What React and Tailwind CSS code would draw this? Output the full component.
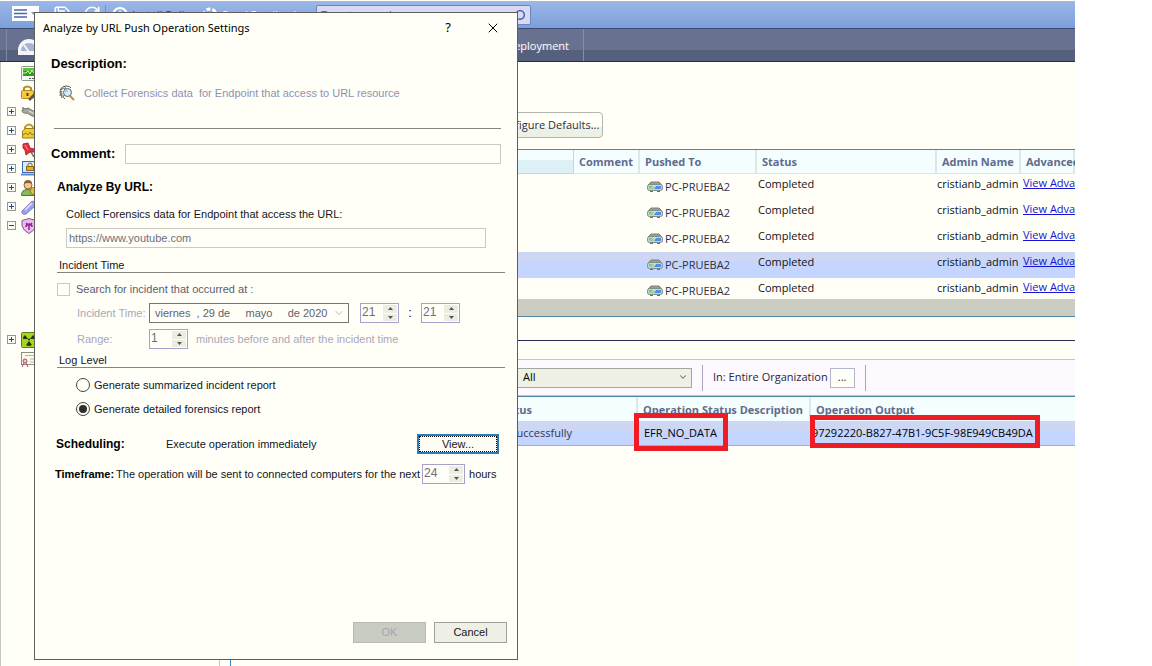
import { useState } from 'react'
import { X, Search, RotateCw, Save, ChevronDown } from 'lucide-react'

const OPERATIONS = [1, 2, 3, 4, 5].map(id => ({
  id,
  computer: 'PC-PRUEBA2',
  status: 'Completed',
  admin: 'cristianb_admin',
}))

const TREE = [
  { icon: 'monitor' },
  { icon: 'lockKey' },
  { icon: 'tool', toggle: '+' },
  { icon: 'lock', toggle: '+' },
  { icon: 'pin', toggle: '+' },
  { icon: 'laptop', toggle: '+' },
  { icon: 'user', toggle: '+' },
  { icon: 'usb', toggle: '+' },
  { icon: 'shield', toggle: '-' },
  {}, {}, {}, {}, {},
  { icon: 'hazard', toggle: '+' },
  { icon: 'certificate' },
]

const TREE_ICONS = {
  monitor: (
    <>
      <rect x="0.5" y="0.5" width="17" height="14" rx="1" fill="#f4f7ee" stroke="#8f9a8c" />
      <rect x="2" y="2" width="15" height="8" fill="#2f9a22" />
      <path d="M2 2h15v3H2z" fill="#5cc23c" />
      <path d="M2 7h3l2-2 2 3 2-4 2 3h3" fill="none" stroke="#d6ffb8" />
      <path d="M8 12.5h2M11 12.5h2" stroke="#4f5a4c" />
    </>
  ),
  lockKey: (
    <>
      <path d="M3 6V3q3-3 7 0v3" fill="none" stroke="#b08a2c" strokeWidth="2" />
      <rect x="0.5" y="5.5" width="12" height="8" rx="1" fill="#f6ca3c" stroke="#b5861a" />
      <path d="M6.5 8v3" stroke="#5b4308" strokeWidth="2" />
      <path d="M8 15l7-7" stroke="#55554f" strokeWidth="2.5" />
    </>
  ),
  tool: (
    <>
      <path d="M1 4q2-1 3 1l3-1 9 5v4l-5-1-5-3q-5 1-5-3l2 0z" fill="#a8a8a0" stroke="#77776f" />
      <path d="M8 7l8 4" stroke="#e4e4dc" />
    </>
  ),
  lock: (
    <>
      <path d="M4 6V4q4-5 8 0v2" fill="none" stroke="#c09a24" strokeWidth="2" />
      <path d="M1.5 8l3-2.500h8l3 2.500v7h-14z" fill="#f2c834" stroke="#a57b14" />
      <path d="M2 12l3-2 2 2 2-3 2 3 4-2" fill="none" stroke="#6f8f1a" />
    </>
  ),
  pin: (
    <>
      <path d="M10 10l3 5" stroke="#77776f" strokeWidth="1.5" />
      <path d="M2 2l5-1 2 5 4 1v3l-4 0-4 3-1-5-2-2z" fill="#e0323c" stroke="#b82630" />
      <path d="M4 3l3 5" stroke="#ff9a9e" />
    </>
  ),
  laptop: (
    <>
      <rect x="1.5" y="0.5" width="16" height="11" fill="#d9e9ff" stroke="#3b66b8" />
      <path d="M7 5V3q2-2 4 0v2" fill="none" stroke="#8a6a14" />
      <rect x="5.5" y="5.500" width="7" height="4" fill="#e8ae24" stroke="#8a6a14" />
      <path d="M0 13.5h17" stroke="#5c87d6" strokeWidth="2" />
    </>
  ),
  user: (
    <>
      <path d="M0.500 15.500q0-6 6-6t7 6z" fill="#86b85c" stroke="#4f7a2e" />
      <circle cx="7" cy="5" r="4" fill="#f2c995" stroke="#8c6430" />
      <path d="M3 4q0-4 4-4t4 4q-4-2-8 0z" fill="#8c6430" />
      <rect x="9.5" y="7.500" width="7" height="7" rx="3" fill="#f0bd2c" stroke="#9a7210" />
    </>
  ),
  usb: (
    <>
      <path d="M1 12L11 2l4 2-1 3-9 8q-5 1-4-3z" fill="#9da0ec" stroke="#8078c0" />
      <path d="M4 11l7-7" stroke="#d8d2ff" strokeWidth="2" />
    </>
  ),
  shield: (
    <>
      <path d="M8 0.5l7 2v5q-1 5-7 8-6-3-7-8v-5z" fill="#f0b8f2" stroke="#77607a" />
      <path d="M8 8v4M8 8L5 5M8 8l3-3M5 9q0-3 3-3t3 3" stroke="#8f2a8c" strokeWidth="1.5" fill="none" />
    </>
  ),
  hazard: (
    <>
      <rect x="0.5" y="0.5" width="16" height="15" rx="1" fill="#a6d422" stroke="#5f7f14" />
      <path d="M7 7L4 3Q1.500 5 2 7zM9 7l3-4q2.500 2 2 4zM8 9l-3 4q3 2 6 0z" fill="#26330c" />
      <circle cx="8" cy="7.500" r="1" fill="#26330c" />
    </>
  ),
  certificate: (
    <>
      <rect x="0.5" y="1.5" width="16" height="12" fill="#fbfbea" stroke="#8f8f7c" />
      <path d="M4 4.5h9M9 8h6M9 11h6" stroke="#b5b59c" />
      <circle cx="4" cy="10" r="2" fill="#f3c7d2" stroke="#b0446a" />
      <path d="M3 12l-2 4M5 12l2 4" stroke="#b0446a" />
    </>
  ),
}

function ComputerIcon() {
  return (
    <svg width="16" height="12" viewBox="0 0 16 12">
      <path d="M4 1h8l3 3H1z" fill="#9a9e98" stroke="#7c807a" />
      <rect x="0.5" y="3.5" width="15" height="6" rx="2" fill="#c4d2da" stroke="#858b88" />
      <path d="M2 5h5L5 8H2z" fill="#6fd252" />
      <path d="M9 5h5v3H7z" fill="#4c92e0" />
      <path d="M2 8.500l5-4 2 1" fill="none" stroke="#eef4f6" strokeWidth="0.500" />
      <path d="M3 10.5h3M10 10.5h3" stroke="#6b6f68" />
    </svg>
  )
}

function FingerprintIcon() {
  return (
    <svg width="17" height="17" viewBox="0 0 17 17" fill="none">
      <path d="M1 5q2-4 6-4 4 0 5 2M1 8q0-5 6-5M1 11q0-2 2-5M3 13q-1-2 0-5M6 14q-2-1-2-4" stroke="#55554f" />
      <path d="M11 11l4 4" stroke="#c98a3c" strokeWidth="2" />
      <circle cx="8.500" cy="7.500" r="4" fill="#d5ebf5" stroke="#4f6670" />
      <path d="M6 7q1-2 3-1" stroke="#8aaebb" />
    </svg>
  )
}

function Spinner({ label, value, wide }) {
  const [val, setVal] = useState(value)
  const step = d => setVal(v => Number(v) + d)
  return (
    <div className={`flex h-5 border border-[#a9a0cc] p-px ${wide ? 'w-[43px]' : 'w-[39px]'}`}>
      <input
        aria-label={label}
        value={val}
        onChange={e => setVal(e.target.value)}
        className="min-w-0 flex-1 pb-0.5 text-xs leading-4 text-[#6d6d78] outline-none"
      />
      <div className="flex w-3.5 flex-col gap-px">
        <button aria-label={`Increase ${label}`} onClick={() => step(1)} className="flex flex-1 items-center justify-center bg-[#ebede2]">
          <svg width="5" height="3" viewBox="0 0 5 3"><path d="M0 3h5L2.5 0z" fill="#55554f" /></svg>
        </button>
        <button aria-label={`Decrease ${label}`} onClick={() => step(-1)} className="flex flex-1 items-center justify-center bg-[#ebede2]">
          <svg width="5" height="3" viewBox="0 0 5 3"><path d="M0 0h5L2.5 3z" fill="#55554f" /></svg>
        </button>
      </div>
    </div>
  )
}

function Radio({ value, checked, onChange, children }) {
  return (
    <label className="flex h-5 items-center gap-1 pl-[41px]">
      <input
        type="radio"
        name="logLevel"
        value={value}
        checked={checked}
        onChange={() => onChange(value)}
        className="size-3.5 appearance-none rounded-full border border-[#44443f] p-0.5 checked:bg-[#2f2f2b] checked:bg-clip-content"
      />
      {children}
    </label>
  )
}

function PushDialog() {
  const [level, setLevel] = useState('detailed')

  return (
    <div role="dialog" aria-labelledby="dialog-title"
      className="absolute top-3 bottom-1.5 left-[34px] flex w-[484px] flex-col border border-[#5e5e5a] bg-[#fffff8] font-['Liberation_Sans',sans-serif] text-[11px] text-[#15151c]">
      <div className="flex h-[30px] shrink-0 items-center pr-4 pl-2 font-['Noto_Sans',sans-serif] text-black">
        <h1 id="dialog-title" className="flex-1">Analyze by URL Push Operation Settings</h1>
        <button className="mr-[34px] text-[13px]" aria-label="Help">?</button>
        <button aria-label="Close"><X size={16} strokeWidth={1.5} /></button>
      </div>

      <h2 className="mt-[11px] pl-4 text-[13px] leading-5 font-bold text-black">Description:</h2>
      <p className="mt-[9px] flex h-5 items-center gap-2 pl-6 text-[#8d91b5]">
        <FingerprintIcon />
        Collect Forensics data&nbsp; for Endpoint that access to URL resource
      </p>
      <hr className="mt-[25px] mr-4 ml-[19px] border-[#85857d]" />

      <div className="mt-[15px] mr-4 ml-4 flex h-5 items-center gap-2.5">
        <label htmlFor="comment" className="text-[13px] font-bold text-black">Comment:</label>
        <input id="comment" className="h-5 min-w-0 flex-1 border border-[#c9cbc0] px-1 outline-none" />
      </div>

      <h2 className="mt-[13px] pl-[22px] text-xs leading-5 font-bold text-black">Analyze By URL:</h2>
      <label htmlFor="url" className="mt-[7px] pl-[31px] leading-5">Collect Forensics data for Endpoint that access the URL:</label>
      <input id="url" defaultValue="https://www.youtube.com"
        className="mt-1 mr-[31px] ml-[31px] h-5 border border-[#c9cbc0] px-0.5 text-[#6d6d7c] outline-none" />

      <h3 className="mt-2.5 mr-3 ml-[22px] border-b border-[#85857d] pl-0.5 leading-[14px]">Incident Time</h3>
      <label className="mt-1.5 flex h-5 items-center gap-1.5 pl-[22px] text-[#5c5c6c]">
        <input type="checkbox" className="size-[13px] appearance-none border border-[#c9cbc0]" />
        Search for incident that occurred at :
      </label>
      <div className="mt-1 flex h-5 items-center pl-[42px]">
        <label htmlFor="date" className="w-[72px] text-[#aaa6b8]">Incident Time:</label>
        <div className="relative mr-[11px] w-[200px]">
          <select id="date" className="h-5 w-full appearance-none border border-[#77776f] pl-[5px] text-[#5f5f70] outline-none">
            <option>viernes&nbsp; , 29 de&nbsp;&nbsp;&nbsp;&nbsp; mayo&nbsp;&nbsp;&nbsp;&nbsp; de 2020</option>
          </select>
          <ChevronDown size={12} strokeWidth={1.5} className="pointer-events-none absolute top-1 right-1 text-[#a0a098]" />
        </div>
        <Spinner label="hour" value="21" />
        <span className="w-[22px] text-center text-[13px]">:</span>
        <Spinner label="minute" value="21" />
      </div>
      <div className="mt-1.5 flex h-5 items-center pl-[42px] text-[#aaa6b8]">
        <span className="w-[72px]">Range:</span>
        <Spinner label="range" value="1" />
        <span className="pl-2">minutes before and after the incident time</span>
      </div>

      <h3 className="mt-1 mr-3 ml-[22px] border-b border-[#85857d] pl-0.5 leading-[14px]">Log Level</h3>
      <div className="mt-[7px] flex flex-col gap-1">
        <Radio value="summary" checked={level === 'summary'} onChange={setLevel}>Generate summarized incident report</Radio>
        <Radio value="detailed" checked={level === 'detailed'} onChange={setLevel}>Generate detailed forensics report</Radio>
      </div>

      <div className="mt-[15px] flex h-5 items-center pr-[18px] pl-[21px]">
        <h2 className="w-[110px] text-xs font-bold text-black">Scheduling:</h2>
        <span className="flex-1">Execute operation immediately</span>
        <button className="h-5 w-[82px] border-2 border-[#2b7bb5] bg-[#fdfdf6]">
          <span className="flex h-4 items-center justify-center border border-dotted border-black">View...</span>
        </button>
      </div>
      <div className="mt-2.5 flex h-5 items-center gap-0.5 pl-5">
        <h2 className="font-bold text-black">Timeframe:</h2>
        <span>The operation will be sent to connected computers for the next</span>
        <Spinner label="hours" value="24" wide />
        <span className="pl-0.5">hours</span>
      </div>

      <div className="mt-auto flex justify-end gap-2 pr-2.5 pb-4">
        <button disabled className="h-[21px] w-[73px] border border-[#b9bbb2] bg-[#c9ccc2] text-[#aaa0b8]">OK</button>
        <button className="h-[21px] w-[73px] border border-[#9fa29a] bg-[#eef0e6]">Cancel</button>
      </div>
    </div>
  )
}

function TopBars() {
  return (
    <>
      <div className="mt-px flex h-7 items-start border-b border-[#3a4a78] bg-linear-to-b from-[#9cb7e8] to-[#7c9fda] pt-1 text-white">
        <button aria-label="Menu" className="mt-px ml-3 flex h-[15px] w-[27px] items-center gap-1 bg-white pl-0.5">
          <svg width="13" height="9" viewBox="0 0 13 9"><path d="M0 1h13M0 4.5h13M0 8h13" stroke="#4667a8" strokeWidth="1.5" /></svg>
          <svg width="5" height="3" viewBox="0 0 5 3"><path d="M0 0h5L2.5 3z" fill="#7f9ac8" /></svg>
        </button>
        <Save size={18} className="ml-3.5" />
        <RotateCw size={18} className="ml-3" />
        <span className="ml-1 h-5 w-px bg-[#7291cc]" />
        <svg width="16" height="16" viewBox="0 0 16 16" className="mt-0.5 ml-1.5"><circle cx="8" cy="8" r="7" fill="none" stroke="white" strokeWidth="2" /><path d="M8 3v8M5 8l3 3 3-3" stroke="white" fill="none" /></svg>
        <span className="mt-0.5 ml-1 w-[70px] text-[#25407e]">Install Policy</span>
        <svg width="16" height="16" viewBox="0 0 16 16" className="mt-0.5"><circle cx="8" cy="8" r="6" fill="none" stroke="white" strokeWidth="3" strokeDasharray="4 2" /></svg>
        <span className="mt-0.5 ml-1 w-[94px]">Send Feedback</span>
        <div className="flex h-5 w-[215px] items-center rounded-xs border border-[#6d86bf] bg-[#d8daf3] px-1 text-[#3f5d9c]">
          <input aria-label="Search" placeholder="Type to search" className="min-w-0 flex-1 outline-none placeholder:text-[#3f5d9c]" />
          <Search size={13} strokeWidth={2.5} className="-scale-x-100" />
        </div>
      </div>
      <nav className="flex h-[33px] border-b border-[#252d4c] bg-linear-to-b from-[#68718f] from-65% to-[#555f7e] to-65% text-white">
        <div className="w-[7px] border-r border-[#8089a6]" />
        <svg width="24" height="20" viewBox="0 0 24 20" className="mt-2 ml-2.5 shrink-0">
          <path d="M1 18V13a11 11 0 0 1 22 0v5z" fill="#f3f5fa" />
          <path d="M4 14a8 8 0 0 1 16 0z" fill="#a9b3cf" />
          <path d="M12 15L7 8" stroke="#f3f5fa" strokeWidth="2" />
        </svg>
        <a href="#deployment" className="flex w-[543px] items-center justify-end border-r border-[#858eab] pt-0.5 pr-3.5">Deployment</a>
      </nav>
    </>
  )
}

function Tree() {
  return (
    <aside className="w-[220px] shrink-0 border-r border-l border-[#c4c8c4] pt-0.5">
      <ul>
        {TREE.map((node, i) => (
          <li key={i} className="flex h-[19px] items-center gap-[5px] pl-1.5">
            <span className="size-[9px]">
              {node.toggle && (
                <svg width="9" height="9" viewBox="0 0 9 9">
                  <rect x="0.5" y="0.5" width="8" height="8" fill="#fcfcf6" stroke="#8e98a0" />
                  <path d={node.toggle === '+' ? 'M2 4.5h5M4.5 2v5' : 'M2 4.5h5'} stroke="#24458a" />
                </svg>
              )}
            </span>
            {node.icon && <svg width="17" height="16" viewBox="0 0 17 16">{TREE_ICONS[node.icon]}</svg>}
          </li>
        ))}
      </ul>
    </aside>
  )
}

const TH = 'border-r-2 border-b border-[#dbe8ea] pr-0 pl-[5px] pt-0.5 text-left font-bold'

function OperationsTable() {
  const [selected, setSelected] = useState(4)

  return (
    <div className="h-[150px] overflow-hidden border-t border-[#4f87a0]">
      <table className="w-full table-fixed border-separate border-spacing-0 whitespace-nowrap">
        <thead>
          <tr className="h-6 bg-[#f5feff] text-[#5f6b8c]">
            <th className="w-[343px] border-r border-b border-[#b4dcf0] bg-linear-to-b from-[#f2fdff] from-45% to-[#dcf0f6] to-45%" />
            <th className={`w-[66px] ${TH}`}>Comment</th>
            <th className={`w-[117px] ${TH}`}>Pushed To</th>
            <th className={`w-[180px] ${TH}`}>Status</th>
            <th className={`w-[84px] ${TH}`}>Admin Name</th>
            <th className={TH}>Advanced</th>
          </tr>
        </thead>
        <tbody>
          {OPERATIONS.map(op => (
            <tr key={op.id} onClick={() => setSelected(op.id)}
              className={`h-[26px] align-top text-[#101018] ${op.id === selected ? 'bg-linear-to-b from-[#cdd6f3] from-40% to-[#c4d6ff] to-40%' : ''}`}>
              <td />
              <td />
              <td className="pl-[7px]">
                <span className="flex h-[26px] items-center gap-0.5 text-[#2b2f45]"><ComputerIcon />{op.computer}</span>
              </td>
              <td className="pl-px leading-5">{op.status}</td>
              <td className="leading-5">{op.admin}</td>
              <td className="pl-0.5 leading-[18px]"><a href="#details" className="text-[#1414d2] underline">View Advanced</a></td>
            </tr>
          ))}
        </tbody>
      </table>
    </div>
  )
}

function StatusPanel() {
  return (
    <section className="mt-[23px] border-t border-[#2a2c55] pt-[18px]">
      <div className="flex h-[37px] items-center border-t border-b border-t-[#c9c0e0] border-b-[#b9c6dd] bg-[#fef9ff] text-[#23263c]">
        <div className="relative ml-[229px] w-[232px]">
          <select aria-label="Status" className="h-5 w-full appearance-none border border-[#a3a79c] bg-[#eef0e4] pl-[62px] text-black outline-none">
            <option>All</option>
          </select>
          <ChevronDown size={10} strokeWidth={2.5} className="pointer-events-none absolute top-1 right-1 text-[#6a6d66]" />
        </div>
        <div className="ml-2.5 flex h-[26px] items-center gap-0.5 border-r border-l border-[#a9a6ba] px-2.5">
          <span>In: Entire Organization</span>
          <button aria-label="Choose organization" className="h-5 w-[25px] border border-[#b3b5c8] bg-[#fffffa]">...</button>
        </div>
      </div>
      <table className="w-full table-fixed border-separate border-spacing-0 border-t border-[#4f87a0] whitespace-nowrap">
        <thead>
          <tr className="h-6 bg-[#f5feff] text-[#5f6b8c]">
            <th className="w-[407px] border-r-2 border-[#dbe8ea] pt-0.5 pl-[266px] text-left font-bold">Status</th>
            <th className="w-[173px] border-r-2 border-[#dbe8ea] pt-0.5 pl-[5px] text-left font-bold">Operation Status Description</th>
            <th className="pt-0.5 pl-[5px] text-left font-bold">Operation Output</th>
          </tr>
        </thead>
        <tbody>
          <tr className="h-[25px] bg-linear-to-b from-[#cdd6f3] from-40% to-[#c4d6ff] to-40%">
            <td className="border-b border-[#aba9cf] pr-[66px] text-right text-[#33374d]">successfully</td>
            <td className="relative border-b border-[#aba9cf] pl-1.5 text-black">
              EFR_NO_DATA
              <span className="absolute -top-2 -left-1 h-[38px] w-[94px] border-5 border-[#ee1c25]" />
            </td>
            <td className="relative border-b border-[#aba9cf] pl-px text-black">
              97292220-B827-47B1-9C5F-98E949CB49DA
              <span className="absolute -top-1.5 -left-px h-[33px] w-[230px] border-5 border-[#ee1c25]" />
            </td>
          </tr>
        </tbody>
      </table>
    </section>
  )
}

export default function App() {
  return (
    <div className="relative min-h-screen overflow-hidden bg-white pr-[77px] font-['Open_Sans',sans-serif] text-[11px]">
      <div className="flex min-h-screen flex-col overflow-hidden bg-[#fffff8]">
        <TopBars />
        <div className="flex flex-1">
          <Tree />
          <main className="ml-2.5 min-w-0 flex-1 border-l border-[#3f87b8]">
            <div className="flex h-[87px] items-end pb-[11px] pl-[260px]">
              <button className="h-[26px] rounded-sm border border-[#b3b7ac] bg-linear-to-b from-[#fffff8] from-60% to-[#edf0e4] to-60% px-[3px] text-[#2b2f45]">
                Configure Defaults...
              </button>
            </div>
            <OperationsTable />
            <div className="h-[18px] border-b border-[#4f87a0] bg-[#cbcdc3]" />
            <StatusPanel />
          </main>
        </div>
      </div>
      <PushDialog />
    </div>
  )
}
